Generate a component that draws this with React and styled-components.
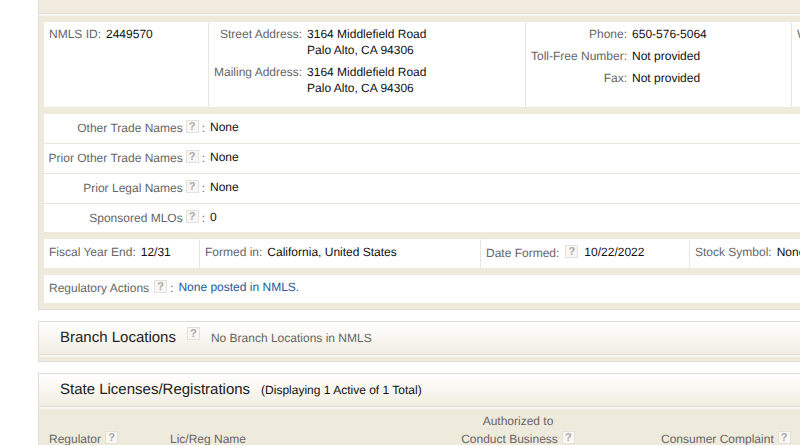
import React from "react";
import styled, { createGlobalStyle } from "styled-components";

const tradeNames = [
  { label: "Other Trade Names", value: "None" },
  { label: "Prior Other Trade Names", value: "None" },
  { label: "Prior Legal Names", value: "None" },
  { label: "Sponsored MLOs", value: "0" }
];

const App = () => (
  <Page>
    <GlobalStyle />
    <Panel $open>
      <PanelHeader $short />
      <PanelBody>
        <Card $columns="165px 317px 266px 1fr">
          <Cell $tall>
            <Details>
              <dt>NMLS ID:</dt>
              <dd>2449570</dd>
            </Details>
          </Cell>
          <Cell $tall>
            <Details>
              <dt>Street Address:</dt>
              <dd>
                3164 Middlefield Road
                <br />
                Palo Alto, CA 94306
              </dd>
              <dt>Mailing Address:</dt>
              <dd>
                3164 Middlefield Road
                <br />
                Palo Alto, CA 94306
              </dd>
            </Details>
          </Cell>
          <Cell $tall>
            <Details>
              <dt>Phone:</dt>
              <dd>650-576-5064</dd>
              <dt>Toll-Free Number:</dt>
              <dd>Not provided</dd>
              <dt>Fax:</dt>
              <dd>Not provided</dd>
            </Details>
          </Cell>
          <Cell $tall>
            <Details>
              <dt>Website:</dt>
            </Details>
          </Cell>
        </Card>

        <Card>
          {tradeNames.map(({ label, value }) => (
            <NameRow key={label}>
              <HelpLabel>
                {label}
                <Help topic={label} />:
              </HelpLabel>
              <Value>{value}</Value>
            </NameRow>
          ))}
        </Card>

        <Card $columns="156px 281px 209px 1fr">
          <Cell>
            <Details>
              <dt>Fiscal Year End:</dt>
              <dd>12/31</dd>
            </Details>
          </Cell>
          <Cell>
            <Details>
              <dt>Formed in:</dt>
              <dd>California, United States</dd>
            </Details>
          </Cell>
          <HelpCell>
            <HelpLabel $wide>
              Date Formed:
              <Help topic="Date Formed" />
            </HelpLabel>
            <Value>10/22/2022</Value>
          </HelpCell>
          <Cell>
            <Details>
              <dt>Stock Symbol:</dt>
              <dd>None</dd>
            </Details>
          </Cell>
        </Card>

        <Card>
          <ActionsRow>
            <Label>Regulatory Actions</Label>
            <HelpLabel>
              <Help topic="Regulatory Actions" />:
            </HelpLabel>
            <Value>
              <a href="#regulatory-actions">None posted in NMLS.</a>
            </Value>
          </ActionsRow>
        </Card>
      </PanelBody>
    </Panel>

    <Panel>
      <PanelHeader>
        <Title>Branch Locations</Title>
        <Help topic="Branch Locations" />
        <Note>No Branch Locations in NMLS</Note>
      </PanelHeader>
      <PanelStrip />
    </Panel>

    <Panel>
      <PanelHeader>
        <Title>State Licenses/Registrations</Title>
        <Note $dark>(Displaying 1 Active of 1 Total)</Note>
      </PanelHeader>
      <LicenseTable>
        <colgroup>
          <col width="121" />
          <col width="215" />
          <col width="276" />
          <col />
        </colgroup>
        <thead>
          <tr>
            <th>
              Regulator
              <Help topic="Regulator" />
            </th>
            <th>Lic/Reg Name</th>
            <CenteredHeading>
              Authorized to
              <br />
              Conduct Business
              <Help topic="Authorized to Conduct Business" />
            </CenteredHeading>
            <th>
              Consumer Complaint
              <Help topic="Consumer Complaint" />
            </th>
          </tr>
        </thead>
      </LicenseTable>
    </Panel>
  </Page>
);

const Help = ({ topic }) => (
  <HelpButton type="button" aria-label={`Help: ${topic}`}>
    ?
  </HelpButton>
);

const GlobalStyle = createGlobalStyle`
  * {
    box-sizing: border-box;
  }
  body {
    margin: 0;
    background: #fff;
    color: #666;
    font-family: "Liberation Sans", Arial, Helvetica, sans-serif;
    font-size: 12px;
    line-height: 16px;
    text-rendering: geometricPrecision;
    overflow: hidden;
  }
`;

const Page = styled.main`
  display: flex;
  flex-direction: column;
  gap: 11px;
  padding-left: 38px;
  white-space: nowrap;
`;

const Panel = styled.section`
  border: 1px solid #dfddd6;
  border-right: 0;
  border-top-width: ${({ $open }) => ($open ? "0" : "1px")};
  background: #efebdc;
`;

const PanelHeader = styled.header`
  display: flex;
  align-items: flex-start;
  height: ${({ $short }) => ($short ? "16px" : "35px")};
  padding: ${({ $short }) => ($short ? "0" : "7px 21px 0")};
  background: ${({ $short }) =>
    $short ? "#f1ecdf" : "linear-gradient(#fff, #f1ede1)"};
  border-bottom: 2px solid #f7f6f0;
  box-shadow: inset 0 -1px #e2dfd8;
`;

const PanelBody = styled.div`
  display: flex;
  flex-direction: column;
  gap: 7px;
  padding: 6px 0 6px 5px;
`;

const PanelStrip = styled.div`
  height: 4px;
`;

const Card = styled.div`
  display: grid;
  grid-template-columns: ${({ $columns }) => $columns || "1fr"};
  background: #fff;
  overflow: hidden;
`;

const Cell = styled.div`
  min-width: 0;
  padding: ${({ $tall }) => ($tall ? "4px 5px 11px" : "5px 5px 7px")};

  &:not(:last-child) {
    border-right: 1px solid #e8e6e1;
  }
`;

const HelpCell = styled(Cell)`
  display: flex;
  gap: 6px;
`;

const Details = styled.dl`
  display: grid;
  grid-template-columns: auto 1fr;
  gap: 6px 5px;
  margin: 0;

  dt {
    text-align: right;
  }
  dd {
    margin: 0;
    color: #111;
  }
`;

const NameRow = styled.div`
  display: grid;
  grid-template-columns: 161px 1fr;
  gap: 5px;
  height: 28px;
  padding-top: 5px;

  &:not(:last-child) {
    height: 30px;
    border-bottom: 1px solid #e8e5dc;
  }
`;

const ActionsRow = styled.div`
  display: flex;
  gap: 5px;
  height: 28px;
  padding: 4px 5px 0;
`;

const HelpButton = styled.button`
  flex: none;
  width: 13px;
  height: 13px;
  padding: 0;
  border: 1px solid #e3e1d9;
  background: #f8f7f3;
  color: #aaa;
  font: bold 11px/11px "Liberation Sans", Arial, sans-serif;
  text-align: center;
`;

const Label = styled.span`
  padding-top: 1px;
`;

const HelpLabel = styled.span`
  display: flex;
  justify-content: flex-end;
  gap: ${({ $wide }) => ($wide ? "6px" : "3px")};
  padding-top: 1px;
`;

const Value = styled.span`
  color: #111;

  a {
    color: #1f5a99;
    text-decoration: none;
  }
`;

const Title = styled.h2`
  margin: 0 11px 0 0;
  color: #222;
  font-size: 15px;
  font-weight: normal;
  line-height: 18px;

  & + ${HelpButton} {
    margin-top: -2px;
  }
`;

const Note = styled.span`
  padding-top: 1px;
  color: ${({ $dark }) => ($dark ? "#111" : "#666")};

  ${HelpButton} + & {
    margin-left: 11px;
  }
`;

const LicenseTable = styled.table`
  width: 100%;
  table-layout: fixed;
  border-collapse: collapse;
  margin-left: 5px;

  th {
    padding: 3px 5px 0;
    font-weight: normal;
    line-height: 18px;
    text-align: left;
    vertical-align: bottom;
  }
  ${HelpButton} {
    margin-left: 4px;
    vertical-align: 2px;
  }
`;

const CenteredHeading = styled.th`
  && {
    text-align: center;
  }
`;

export default App;
